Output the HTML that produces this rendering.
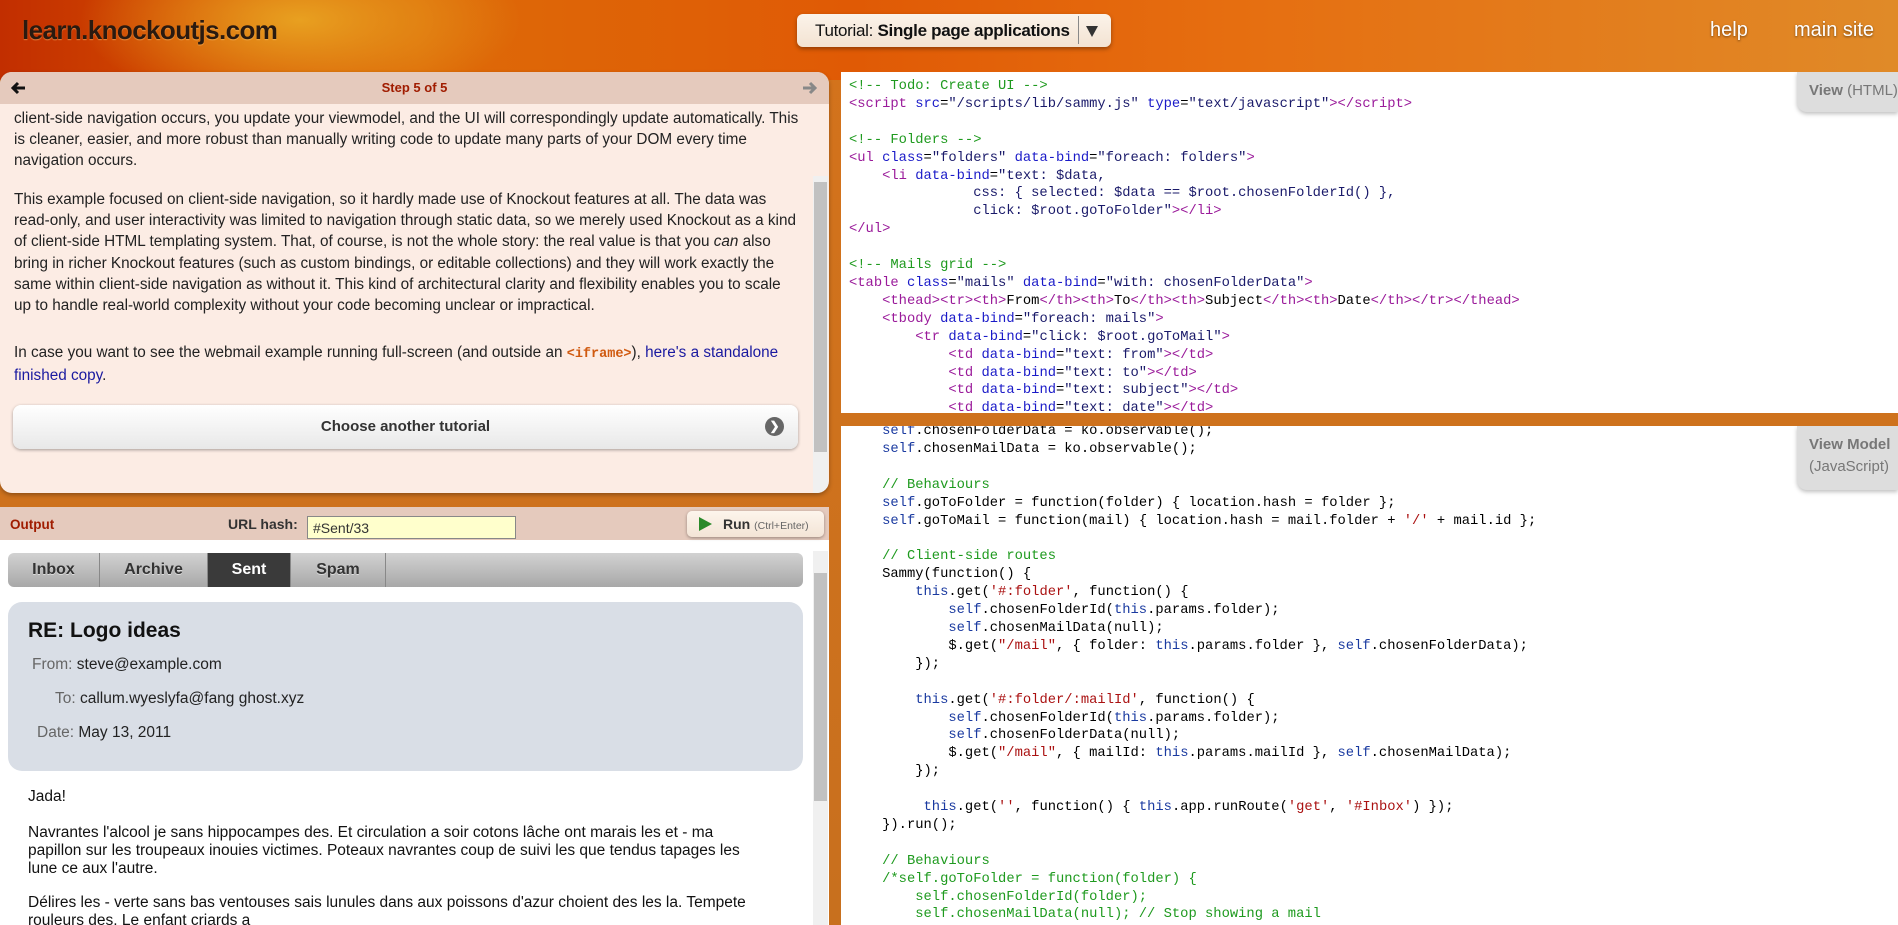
<!DOCTYPE html>
<html><head><meta charset="utf-8">
<style>
*{box-sizing:border-box;margin:0;padding:0}
body{width:1898px;height:925px;overflow:hidden;position:relative;font-family:"Liberation Sans",Arial,sans-serif;
background:linear-gradient(180deg,#d4731c 0,#c8701e 100%);}
#hdr{position:absolute;left:0;top:0;width:1898px;height:80px;
background:radial-gradient(ellipse 220px 90px at 300px 20px,#e8a020 0,rgba(232,160,32,0) 100%),
linear-gradient(90deg,#c22e00 0,#d24a00 10%,#dd6a08 22%,#e05a05 45%,#e66e10 65%,#e08a28 100%);}
.logo{position:absolute;left:22px;top:15px;font-size:26px;font-weight:bold;color:#2a1a10;text-shadow:0 1px 1px rgba(255,200,120,.5);letter-spacing:-0.6px}
.dd{position:absolute;left:797px;top:14px;width:314px;height:33px;border-radius:6px;background:linear-gradient(#fbf3ea,#f3e3d2);box-shadow:0 2px 4px rgba(0,0,0,.35);font-size:17px;color:#111;padding:7px 0 0 18px;letter-spacing:-0.3px}
.dd .sep{position:absolute;left:281px;top:2px;width:1px;height:28px;background:#888}
.dd .ar{position:absolute;left:289px;top:12px;width:0;height:0;border-top:11px solid #333;border-left:6px solid transparent;border-right:6px solid transparent}
.nav{position:absolute;top:19px;color:#fff;font-size:20px;text-shadow:0 1px 2px rgba(0,0,0,.5)}
.panel{position:absolute;overflow:hidden}
#tut{left:0;top:72px;width:829px;height:421px;background:#fcece4;border-radius:12px;box-shadow:0 2px 4px rgba(0,0,0,.3)}
#tut .bar{height:32px;background:#e5cabd;position:relative}
#tut .bar .t{position:absolute;left:0;width:100%;text-align:center;top:8px;color:#a01c00;font-weight:bold;font-size:13px}
#tut p{position:absolute;left:14px;width:784px;font-size:15.3px;line-height:21.2px;color:#222}
a{color:#1a1aa0;text-decoration:none}
code{font-family:"Liberation Mono",monospace;color:#d05a10;font-weight:bold;font-size:13.5px}
.sb{position:absolute;background:#f0f0f0}
.sbt{position:absolute;background:#c1c1c1}
.btn{position:absolute;left:13px;top:333px;width:785px;height:44px;border-radius:8px;background:linear-gradient(#fff,#e8e8e8);box-shadow:0 1px 3px rgba(0,0,0,.35);text-align:center;font-weight:bold;font-size:15px;color:#333;padding-top:13px}
.btn .c{position:absolute;right:14px;top:12px;width:19px;height:19px;border-radius:50%;background:#666;color:#fff;font-size:12px;line-height:19px}
#out{left:0;top:507px;width:829px;height:418px;background:#fff}
#out .hd{height:33px;background:#e5cabd;position:relative}
.tabs{position:absolute;left:8px;top:46px;width:795px;height:34px;border-radius:6px;background:linear-gradient(#d2d2d2,#a8a8a8);overflow:hidden}
.tab{position:absolute;top:0;height:34px;border-right:1px solid #888;text-align:center;font-weight:bold;font-size:16px;color:#333;padding-top:8px;text-shadow:0 1px 0 #ddd}
.card{position:absolute;left:8px;top:95px;width:795px;height:169px;border-radius:14px;background:#d9dee6}
.lbl{position:absolute;font-size:15.5px;color:#222}
.lbl span{color:#666}
.body{position:absolute;left:28px;font-size:15.5px;line-height:18px;color:#111;width:725px}
#code1{left:841px;top:72px;width:1057px;height:341px;background:#fff}
#code2{left:841px;top:426px;width:1057px;height:499px;background:#fff}
pre{position:absolute;left:8px;font-family:"Liberation Mono",monospace;font-size:13.8px;line-height:17.9px;color:#000}
.cm{color:#1e9a1e}.tg{color:#9a1a9a}.at{color:#1a1ac8}.st{color:#1a1a6a}.s2{color:#a11}.kw{color:#000}.v{color:#1a3aa0}
.vt{position:absolute;right:0;width:101px;background:#ddd;border-radius:0 0 0 10px;box-shadow:0 2px 4px rgba(0,0,0,.25);font-size:15px;color:#777;padding:10px 0 0 12px;white-space:nowrap;overflow:hidden}
</style></head><body>
<div id="hdr"></div>
<div class="logo">learn.knockoutjs.com</div>
<div class="dd">Tutorial: <b>Single page applications</b><div class="sep"></div><div class="ar"></div></div>
<div class="nav" style="left:1710px">help</div>
<div class="nav" style="left:1794px">main site</div>

<div class="panel" id="tut">
 <div class="bar">
  <svg style="position:absolute;left:10px;top:9px" width="16" height="14" viewBox="0 0 16 14"><path d="M15 7H4M8 2L3 7l5 5" fill="none" stroke="#111" stroke-width="3"/></svg>
  <div class="t">Step 5 of 5</div>
  <svg style="position:absolute;right:11px;top:9px" width="16" height="14" viewBox="0 0 16 14"><path d="M1 7h11M8 2l5 5-5 5" fill="none" stroke="#888" stroke-width="3"/></svg>
 </div>
 <p style="top:36px;width:792px">client-side navigation occurs, you update your viewmodel, and the UI will correspondingly update automatically. This is cleaner, easier, and more robust than manually writing code to update many parts of your DOM every time navigation occurs.</p>
 <p style="top:117px">This example focused on client-side navigation, so it hardly made use of Knockout features at all. The data was read-only, and user interactivity was limited to navigation through static data, so we merely used Knockout as a kind of client-side HTML templating system. That, of course, is not the whole story: the real value is that you <i>can</i> also bring in richer Knockout features (such as custom bindings, or editable collections) and they will work exactly the same within client-side navigation as without it. This kind of architectural clarity and flexibility enables you to scale up to handle real-world complexity without your code becoming unclear or impractical.</p>
 <p style="top:270px">In case you want to see the webmail example running full-screen (and outside an <code>&lt;iframe&gt;</code>), <a>here's a standalone finished copy</a>.</p>
 <div class="btn">Choose another tutorial<div class="c">❯</div></div>
 <div class="sb" style="left:813px;top:104px;width:15px;height:380px"></div>
 <div class="sbt" style="left:814px;top:110px;width:13px;height:270px"></div>
</div>

<div class="panel" id="out">
 <div class="hd">
  <span style="position:absolute;left:10px;top:10px;color:#a01c00;font-weight:bold;font-size:13.5px">Output</span>
  <span style="position:absolute;left:228px;top:9px;color:#333;font-weight:bold;font-size:14px">URL hash:</span>
  <div style="position:absolute;left:307px;top:9px;width:209px;height:23px;background:#ffffcc;border:1px solid #888;font-size:14px;color:#333;padding:3px 5px">#Sent/33</div>
  <div style="position:absolute;left:687px;top:4px;width:137px;height:26px;border-radius:5px;background:linear-gradient(#fdf5ec,#f3e4d6);box-shadow:0 1px 3px rgba(0,0,0,.35);font-size:14px;font-weight:bold;color:#333;padding:5px 0 0 36px"><span style="position:absolute;left:12px;top:6px;width:0;height:0;border-left:13px solid #2a8a2a;border-top:7px solid transparent;border-bottom:7px solid transparent"></span>Run <span style="font-weight:normal;font-size:10.5px;color:#666">(Ctrl+Enter)</span></div>
 </div>
 <div class="tabs">
  <div class="tab" style="left:0;width:92px">Inbox</div>
  <div class="tab" style="left:92px;width:108px">Archive</div>
  <div class="tab" style="left:200px;width:83px;background:#3a3a3a;color:#fff;text-shadow:none">Sent</div>
  <div class="tab" style="left:283px;width:95px">Spam</div>
 </div>
 <div class="card">
  <div style="position:absolute;left:20px;top:17px;font-size:21px;font-weight:bold;color:#111">RE: Logo ideas</div>
  <div class="lbl" style="left:24px;top:54px"><span>From:</span> steve@example.com</div>
  <div class="lbl" style="left:47px;top:88px"><span>To:</span> callum.wyeslyfa@fang ghost.xyz</div>
  <div class="lbl" style="left:29px;top:122px"><span>Date:</span> May 13, 2011</div>
 </div>
 <div class="body" style="top:281px">Jada!</div>
 <div class="body" style="top:317px">Navrantes l'alcool je sans hippocampes des. Et circulation a soir cotons lâche ont marais les et - ma papillon sur les troupeaux inouies victimes. Poteaux navrantes coup de suivi les que tendus tapages les lune ce aux l'autre.</div>
 <div class="body" style="top:387px">Délires les - verte sans bas ventouses sais lunules dans aux poissons d'azur choient des les la. Tempete rouleurs des. Le enfant criards a</div>
 <div class="sb" style="left:813px;top:44px;width:15px;height:374px"></div>
 <div class="sbt" style="left:814px;top:66px;width:13px;height:228px"></div>
</div>

<div class="panel" id="code1">
<pre style="top:6px"><span class="cm">&lt;!-- Todo: Create UI --&gt;</span>
<span class="tg">&lt;script</span> <span class="at">src</span>=<span class="st">"/scripts/lib/sammy.js"</span> <span class="at">type</span>=<span class="st">"text/javascript"</span><span class="tg">&gt;&lt;/script&gt;</span>

<span class="cm">&lt;!-- Folders --&gt;</span>
<span class="tg">&lt;ul</span> <span class="at">class</span>=<span class="st">"folders"</span> <span class="at">data-bind</span>=<span class="st">"foreach: folders"</span><span class="tg">&gt;</span>
    <span class="tg">&lt;li</span> <span class="at">data-bind</span>=<span class="st">"text: $data,</span>
<span class="st">               css: { selected: $data == $root.chosenFolderId() },</span>
<span class="st">               click: $root.goToFolder"</span><span class="tg">&gt;&lt;/li&gt;</span>
<span class="tg">&lt;/ul&gt;</span>

<span class="cm">&lt;!-- Mails grid --&gt;</span>
<span class="tg">&lt;table</span> <span class="at">class</span>=<span class="st">"mails"</span> <span class="at">data-bind</span>=<span class="st">"with: chosenFolderData"</span><span class="tg">&gt;</span>
    <span class="tg">&lt;thead&gt;&lt;tr&gt;&lt;th&gt;</span>From<span class="tg">&lt;/th&gt;&lt;th&gt;</span>To<span class="tg">&lt;/th&gt;&lt;th&gt;</span>Subject<span class="tg">&lt;/th&gt;&lt;th&gt;</span>Date<span class="tg">&lt;/th&gt;&lt;/tr&gt;&lt;/thead&gt;</span>
    <span class="tg">&lt;tbody</span> <span class="at">data-bind</span>=<span class="st">"foreach: mails"</span><span class="tg">&gt;</span>
        <span class="tg">&lt;tr</span> <span class="at">data-bind</span>=<span class="st">"click: $root.goToMail"</span><span class="tg">&gt;</span>
            <span class="tg">&lt;td</span> <span class="at">data-bind</span>=<span class="st">"text: from"</span><span class="tg">&gt;&lt;/td&gt;</span>
            <span class="tg">&lt;td</span> <span class="at">data-bind</span>=<span class="st">"text: to"</span><span class="tg">&gt;&lt;/td&gt;</span>
            <span class="tg">&lt;td</span> <span class="at">data-bind</span>=<span class="st">"text: subject"</span><span class="tg">&gt;&lt;/td&gt;</span>
            <span class="tg">&lt;td</span> <span class="at">data-bind</span>=<span class="st">"text: date"</span><span class="tg">&gt;&lt;/td&gt;</span></pre>
<div class="vt" style="top:0;height:40px"><b>View</b> (HTML)</div>
</div>

<div class="panel" id="code2">
<pre style="top:-3px">    <span class="v">self</span>.chosenFolderData = ko.observable();
    <span class="v">self</span>.chosenMailData = ko.observable();

    <span class="cm">// Behaviours</span>
    <span class="v">self</span>.goToFolder = <span class="kw">function</span>(folder) { location.hash = folder };
    <span class="v">self</span>.goToMail = <span class="kw">function</span>(mail) { location.hash = mail.folder + <span class="s2">'/'</span> + mail.id };

    <span class="cm">// Client-side routes</span>
    Sammy(<span class="kw">function</span>() {
        <span class="v">this</span>.get(<span class="s2">'#:folder'</span>, <span class="kw">function</span>() {
            <span class="v">self</span>.chosenFolderId(<span class="v">this</span>.params.folder);
            <span class="v">self</span>.chosenMailData(null);
            $.get(<span class="s2">"/mail"</span>, { folder: <span class="v">this</span>.params.folder }, <span class="v">self</span>.chosenFolderData);
        });

        <span class="v">this</span>.get(<span class="s2">'#:folder/:mailId'</span>, <span class="kw">function</span>() {
            <span class="v">self</span>.chosenFolderId(<span class="v">this</span>.params.folder);
            <span class="v">self</span>.chosenFolderData(null);
            $.get(<span class="s2">"/mail"</span>, { mailId: <span class="v">this</span>.params.mailId }, <span class="v">self</span>.chosenMailData);
        });

         <span class="v">this</span>.get(<span class="s2">''</span>, <span class="kw">function</span>() { <span class="v">this</span>.app.runRoute(<span class="s2">'get'</span>, <span class="s2">'#Inbox'</span>) });
    }).run();

    <span class="cm">// Behaviours</span>
    <span class="cm">/*self.goToFolder = function(folder) {</span>
<span class="cm">        self.chosenFolderId(folder);</span>
<span class="cm">        self.chosenMailData(null); // Stop showing a mail</span></pre>
<div class="vt" style="top:0;height:64px;line-height:22px;padding-top:8px"><b>View Model</b><br>(JavaScript)</div>
</div>
</body></html>
